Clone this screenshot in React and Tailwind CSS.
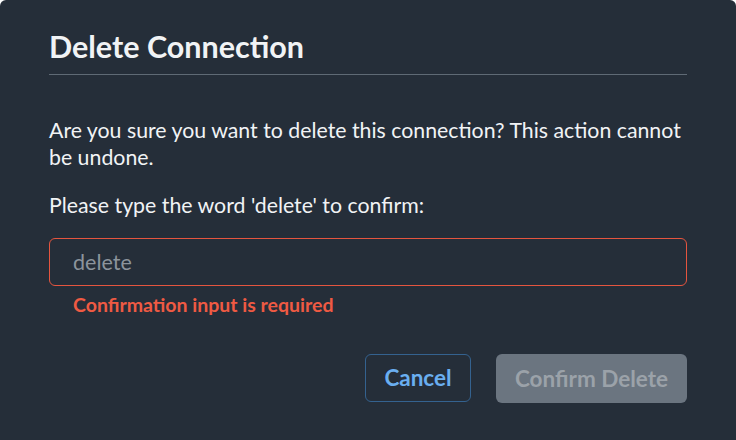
export default function App() {
  return (
    <div className="w-[736px] h-[440px] bg-[#252e39] rounded-t-md overflow-hidden font-['Lato','Noto_Sans',sans-serif]">
      <div className="px-[49px] pt-[28px]">
        <h2 className="text-[30.5px] leading-[36px] font-bold text-[#f1f3f5]">Delete Connection</h2>
        <div className="mt-[10px] h-px bg-[#5f6a75]" />
        <p className="mt-[42px] text-[21.3px] leading-[27px] text-[#f1f3f5]">
          Are you sure you want to delete this connection? This action cannot be undone.
        </p>
        <p className="mt-[21px] text-[21.3px] leading-[27px] text-[#f1f3f5]">Please type the word 'delete' to confirm:</p>
        <input
          placeholder="delete"
          className="mt-[19px] w-full h-[48px] rounded-md border-[1.5px] border-[#e5553f] bg-transparent px-[23px] text-[21.5px] text-white placeholder:text-[#8c949c] outline-none"
        />
        <p className="mt-[7px] pl-[24px] text-[19.5px] leading-[24px] font-bold text-[#ef5a43]">Confirmation input is required</p>
        <div className="mt-[37px] flex justify-end gap-[25px]">
          <button className="h-[48px] w-[106px] rounded-md border border-[#34628f] text-[22.5px] font-bold text-[#6aaef0]">Cancel</button>
          <button className="h-[49px] w-[191px] rounded-md bg-[#6b7580] text-[22.5px] font-bold text-[#9ba2a9]">Confirm Delete</button>
        </div>
      </div>
    </div>
  );
}
